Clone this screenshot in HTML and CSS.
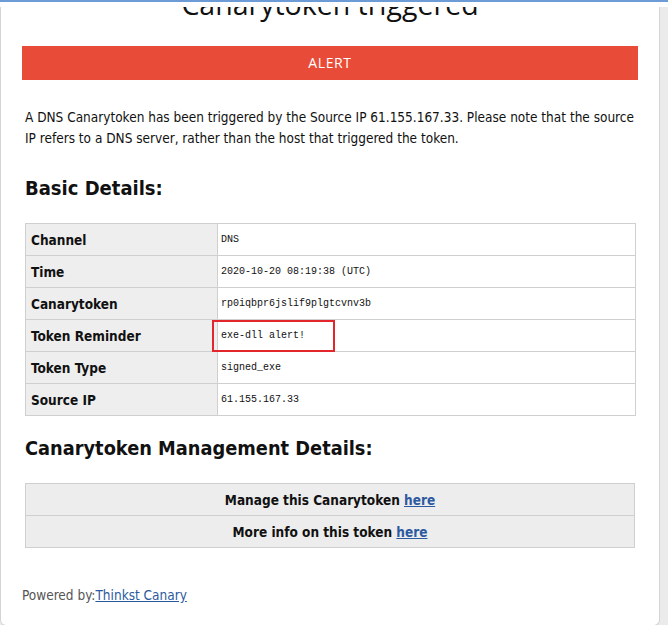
FILE: index.html
```html
<!DOCTYPE html>
<html>
<head>
<meta charset="utf-8">
<link rel="stylesheet" href="styles.css">
</head>
<body>
<div class="topline"></div>
<div class="topgap"></div>
<div class="card">
  <h1 class="title">Canarytoken triggered</h1>
  <div class="alert">ALERT</div>
  <p class="intro">A DNS Canarytoken has been triggered by the Source IP 61.155.167.33. Please note that the source IP refers to a DNS server, rather than the host that triggered the token.</p>
  <h2 class="section">Basic Details:</h2>
  <table class="details">
    <tr><th>Channel</th><td>DNS</td></tr>
    <tr><th>Time</th><td>2020-10-20 08:19:38 (UTC)</td></tr>
    <tr><th>Canarytoken</th><td>rp0iqbpr6jslif9plgtcvnv3b</td></tr>
    <tr><th>Token Reminder</th><td><span class="mark">exe-dll alert!</span></td></tr>
    <tr><th>Token Type</th><td>signed_exe</td></tr>
    <tr><th>Source IP</th><td>61.155.167.33</td></tr>
  </table>
  <h2 class="section second">Canarytoken Management Details:</h2>
  <table class="manage">
    <tr><td>Manage this Canarytoken <a href="#">here</a></td></tr>
    <tr><td>More info on this token <a href="#">here</a></td></tr>
  </table>
  <p class="footer">Powered by:<a href="#">Thinkst Canary</a></p>
</div>
</body>
</html>
```
FILE: styles.css
```css
html, body {
  margin: 0;
  padding: 0;
}
body {
  background: #ebebeb;
  font-family: "DejaVu Sans Condensed", "DejaVu Sans", sans-serif;
  color: #111;
  height: 625px;
  overflow: hidden;
}
.topline {
  height: 2px;
  background: #6c9bd6;
}
.topgap {
  height: 5px;
  background: #fff;
}
.card {
  width: 658px;
  background: #fff;
  border-left: 1px solid #d4d4d4;
  border-right: 1px solid #d4d4d4;
  border-bottom: 1px solid #d4d4d4;
  border-radius: 0 0 6px 6px;
  padding: 0 0 22px 0;
  overflow: hidden;
}
.title {
  font-family: "Open Sans", sans-serif;
  font-weight: 400;
  font-size: 28.5px;
  line-height: 30px;
  text-align: center;
  margin: -18px 0 0 0;
  color: #111;
}
.alert {
  margin: 27px 21px 0 21px;
  height: 34px;
  background: #e84c38;
  color: #fff;
  font-family: "Open Sans", sans-serif;
  font-size: 14px;
  line-height: 34px;
  text-align: center;
  letter-spacing: 0.6px;
}
.intro {
  margin: 27px 24px 0 24px;
  font-size: 13.5px;
  line-height: 21px;
}
.section {
  margin: 27px 24px 0 24px;
  font-size: 20px;
  font-weight: bold;
  line-height: 24px;
}
.second {
  margin-top: 21px;
  font-size: 19.8px;
}
.details, .manage {
  border-collapse: collapse;
  margin: 23px 0 0 24px;
  width: 611px;
}
.details th, .details td {
  border: 1px solid #cfcfcf;
  height: 31px;
  padding: 0 5px;
  text-align: left;
}
.details td {
  padding-left: 3px;
}
.details th {
  width: 181px;
  background: #eeeeee;
  font-size: 13.5px;
  font-weight: bold;
}
.details td {
  font-family: "Liberation Mono", monospace;
  font-size: 10px;
}
.mark {
  position: relative;
}
.mark::after {
  content: "";
  position: absolute;
  left: -9px;
  top: -10px;
  width: 119px;
  height: 28px;
  border: 2px solid #e3262b;
}
.manage {
  margin-top: 22px;
  width: 610px;
}
.manage td {
  border: 1px solid #cfcfcf;
  background: #ededed;
  height: 31px;
  padding: 0;
  text-align: center;
  font-size: 13.5px;
  font-weight: bold;
}
a {
  color: #2c5aa0;
  text-decoration: underline;
}
.footer {
  margin: 39px 21px 0 21px;
  font-size: 13.5px;
  color: #555;
}
```
